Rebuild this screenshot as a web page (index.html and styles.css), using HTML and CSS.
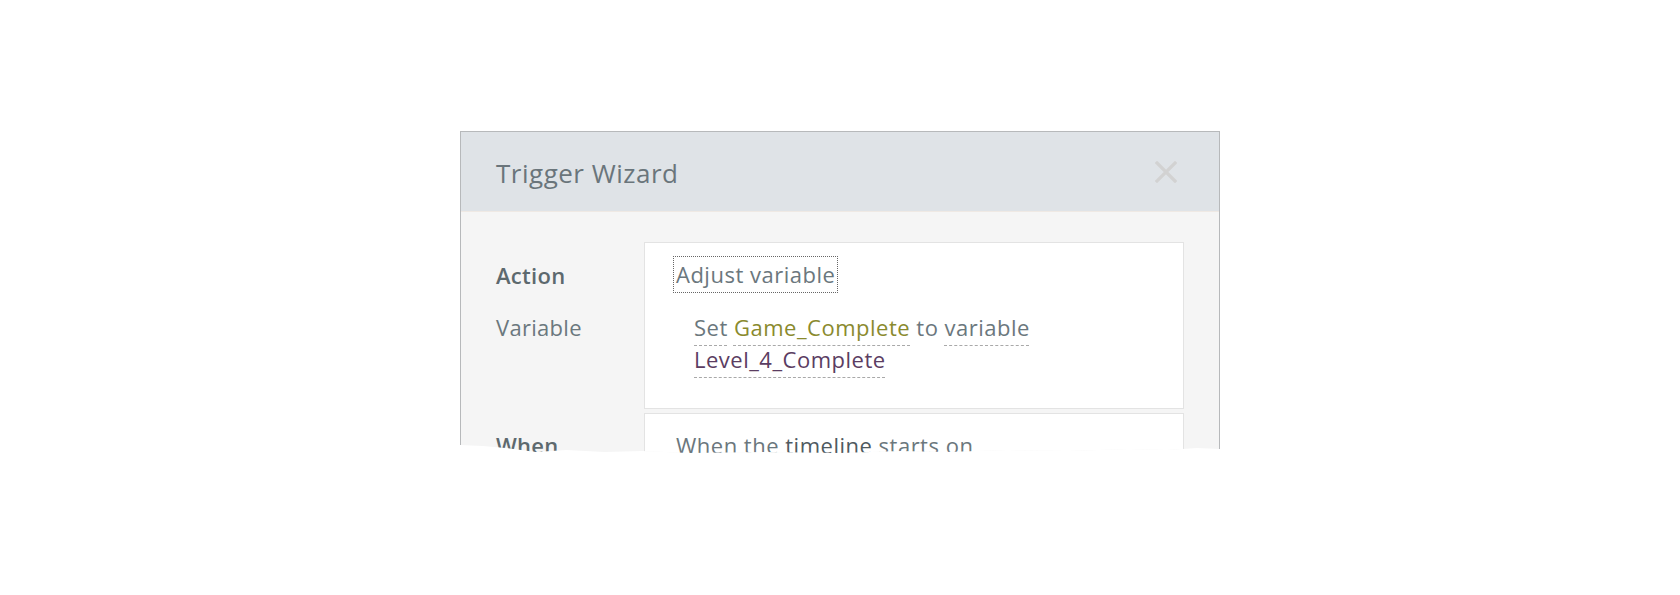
FILE: index.html
```html
<!DOCTYPE html>
<html lang="en">
<head>
<meta charset="utf-8">
<title>Trigger Wizard</title>
<link rel="stylesheet" href="styles.css">
</head>
<body>
<div class="page">
  <div class="dialog">
    <div class="header">
      <div class="title">Trigger Wizard</div>
      <svg class="close" width="22" height="22" viewBox="0 0 22 22" aria-label="Close">
        <path d="M2 2 L20 20 M20 2 L2 20" stroke="#d2d2d2" stroke-width="3.2" stroke-linecap="square" fill="none"/>
      </svg>
    </div>
    <div class="body">
      <div class="row">
        <div class="labels">
          <div class="label strong">Action</div>
          <div class="label second">Variable</div>
        </div>
        <div class="card">
          <div class="action-box">Adjust variable</div>
          <div class="vars">
            <div class="line"><span class="u">Set</span> <span class="u var-a">Game_Complete</span> to <span class="u">variable</span></div>
            <div class="line"><span class="u var-b">Level_4_Complete</span></div>
          </div>
        </div>
      </div>
      <div class="row">
        <div class="labels labels-when">
          <div class="label strong">When</div>
        </div>
        <div class="card card-when">
          <div class="line">When the <span class="u dark">timeline</span> starts on</div>
        </div>
      </div>
    </div>
  </div>
</div>
</body>
</html>
```

FILE: styles.css
```css
html, body {
  margin: 0;
  padding: 0;
  background: #ffffff;
}

body {
  font-family: "Open Sans", "Noto Sans", sans-serif;
  color: #6b777d;
}

.page {
  padding-top: 131px;
}

.dialog {
  box-sizing: border-box;
  width: 760px;
  height: 324px;
  margin: 0 auto;
  border: 1px solid #b7b9bb;
  border-bottom: none;
  background: #f5f5f5;
  overflow: hidden;
  clip-path: polygon(0 0, 100% 0, 100% 318px, 97% 317px, 93% 319px, 88% 318px, 80% 320px, 72% 319px, 64% 321px, 58% 320px, 50% 322px, 40% 321px, 30% 322px, 24% 320px, 19% 321px, 14% 319px, 10% 321px, 6% 317px, 3% 315px, 0 314px);
}

.header {
  height: 79px;
  background: #dfe3e7;
  border-bottom: 1px solid #efe9e4;
  display: flex;
  align-items: center;
  justify-content: space-between;
  padding: 0 42px 0 35px;
}

.title {
  font-size: 26px;
  color: #6a757b;
  margin-top: 2px;
  letter-spacing: 0.5px;
}

.close {
  display: block;
}

.body {
  padding: 30px 35px 0 35px;
}

.row {
  display: grid;
  grid-template-columns: 148px 1fr;
  margin-bottom: 4px;
}

.labels {
  padding-top: 17px;
}

.labels-when {
  padding-top: 16px;
}

.label {
  font-size: 22px;
  line-height: 32px;
  color: #6b787e;
  letter-spacing: 0.3px;
}

.label.strong {
  font-weight: 600;
  color: #5d696e;
}

.label.second {
  margin-top: 20px;
}

.card {
  background: #ffffff;
  border: 1px solid #e3e3e3;
  padding: 13px 20px 33px 28px;
  font-size: 22px;
  letter-spacing: 0.5px;
  color: #6b777d;
}

.card-when {
  padding-left: 31px;
  padding-bottom: 40px;
}

.action-box {
  width: fit-content;
  border: 1px dotted #666666;
  padding: 0 2px;
  line-height: 35px;
}

.vars {
  margin-left: 21px;
  margin-top: 18px;
}

.line {
  line-height: 32px;
  white-space: nowrap;
}

.card-when .line {
  line-height: 35px;
  padding-top: 1px;
}

.u {
  text-decoration: underline dashed #a9a9a9 1px;
  text-underline-offset: 9px;
}

.var-a {
  color: #8a8a2e;
}

.var-b {
  color: #5b3d62;
}

.dark {
  color: #4f5a5f;
}
```
